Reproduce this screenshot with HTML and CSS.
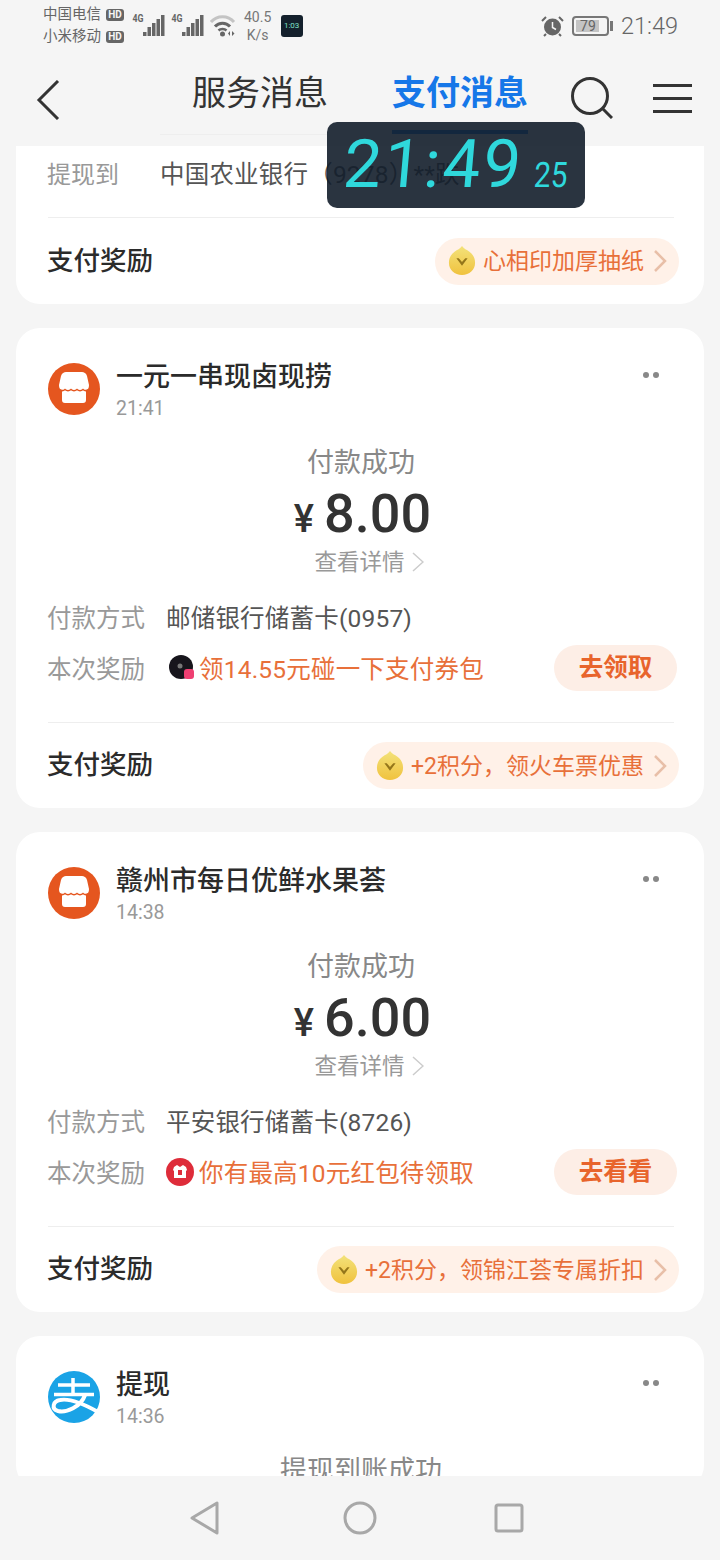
FILE: index.html
```html
<!DOCTYPE html>
<html lang="zh-CN">
<head>
    <meta charset="UTF-8">
    <meta name="viewport" content="width=device-width, initial-scale=1.0">
    <title>支付消息</title>
    <link rel="stylesheet" href="styles.css">
</head>
<body>

    <!-- shared icons -->
    <svg class="defs" width="0" height="0">
        <defs>
            <linearGradient id="gold" x1="0" y1="0" x2="0" y2="1">
                <stop offset="0" stop-color="#f3e27a"/>
                <stop offset="1" stop-color="#f0c23e"/>
            </linearGradient>
        </defs>
        <symbol id="coin" viewBox="0 0 30 32">
            <path d="M15 0 C17 3 20 4 23 6 C27 9 29 13 29 18 C29 26 23 31 15 31 C7 31 1 26 1 18 C1 13 3 9 7 6 C10 4 13 3 15 0Z" fill="url(#gold)"/>
            <path d="M9 13 L15 21 L21 13 L18.500 13 L15 17 L11.500 13Z" fill="#94761a"/>
        </symbol>
        <symbol id="shop" viewBox="0 0 52 52">
            <circle cx="26" cy="26" r="26" fill="#e5561f"/>
            <path d="M18 9 H34 C36 9 38 10 39 13 L41 22 C41 25 40 27 38 27 V37 C38 39 37 40 35 40 H17 C15 40 14 39 14 37 V27 C12 27 11 25 11 22 L13 13 C14 10 16 9 18 9Z" fill="#fff"/>
            <path d="M11 26 Q14 29 17 26.500 Q20 29 23 26.500 Q26 29 29 26.500 Q32 29 35 26.500 Q38 29 41 26" fill="none" stroke="#e5561f" stroke-width="1.500"/>
        </symbol>
        <symbol id="signal" viewBox="0 0 22 22">
            <rect x="0" y="17" width="3.500" height="4" fill="#666"/>
            <rect x="4.500" y="12" width="3.500" height="9" fill="#666"/>
            <rect x="9" y="8" width="3.500" height="13" fill="#666"/>
            <rect x="13.500" y="4" width="3.500" height="17" fill="#666"/>
            <rect x="18" y="0" width="3.500" height="21" fill="#666"/>
        </symbol>
        <symbol id="arrow" viewBox="0 0 14 24">
            <path d="M2 2 L12 12 L2 22" fill="none" stroke="#e8bfa8" stroke-width="2.500"/>
        </symbol>
    </svg>

    <div class="status-bar">
        <div class="status-left">
            <div class="carriers">
                <div class="carrier">中国电信<span class="hd">HD</span></div>
                <div class="carrier">小米移动<span class="hd">HD</span></div>
            </div>
            <span class="net">4G</span>
            <svg class="signal" width="22" height="22"><use href="#signal"/></svg>
            <span class="net net-2">4G</span>
            <svg class="signal" width="22" height="22"><use href="#signal"/></svg>
            <svg class="wifi" width="26" height="22" viewBox="0 0 26 22">
                <path d="M1 7 C7 0 18 0 24 7" fill="none" stroke="#c4c4c4" stroke-width="3"/>
                <path d="M5 11.500 C9 7 16 7 20 11.500" fill="none" stroke="#666" stroke-width="3"/>
                <path d="M8.500 15.500 C10.500 13.500 14.500 13.500 16.500 15.500" fill="none" stroke="#666" stroke-width="2.500"/>
                <circle cx="12.500" cy="19" r="2.500" fill="#666"/>
                <path d="M20 16 V21 L18 18.500Z M22 16 V21 L24.500 18.500Z" fill="#666"/>
            </svg>
            <div class="speed"><span>40.5</span><span>K/s</span></div>
            <div class="app-thumb">1:03</div>
        </div>
        <div class="status-right">
            <svg width="23" height="22" viewBox="0 0 23 22">
                <circle cx="11.500" cy="12" r="8.500" fill="#666"/>
                <path d="M11.500 7 V12.500 L15 14.500" fill="none" stroke="#f5f5f5" stroke-width="1.500"/>
                <path d="M1 6 L5 2 M22 6 L18 2 M5 19 L3 21 M18 19 L20 21" stroke="#666" stroke-width="2"/>
            </svg>
            <div class="battery"><div class="battery-fill"></div><span>79</span></div>
            <div class="battery-cap"></div>
            <span class="clock-small">21:49</span>
        </div>
    </div>

    <header class="top-nav">
        <svg class="back" width="24" height="40" viewBox="0 0 24 40">
            <path d="M22 1 L3 20 L22 39" fill="none" stroke="#333" stroke-width="3"/>
        </svg>
        <div class="tabs">
            <div class="tab">服务消息</div>
            <div class="tab active">支付消息</div>
        </div>
        <svg class="search" width="42" height="42" viewBox="0 0 42 42">
            <circle cx="19" cy="19" r="17.500" fill="none" stroke="#333" stroke-width="3"/>
            <path d="M31 31 L41 41" stroke="#333" stroke-width="3"/>
        </svg>
        <div class="menu"><i></i><i></i><i></i></div>
    </header>

    <main class="feed">
        <section class="card card-cut">
            <div class="row row-first">
                <span class="row-label row-label-short">提现到</span>
                <span class="row-value">中国农业银行（9278）**跌</span>
            </div>
            <div class="card-foot">
                <span class="foot-label">支付奖励</span>
                <div class="pill">
                    <svg width="28" height="30"><use href="#coin"/></svg>
                    <span>心相印加厚抽纸</span>
                    <svg width="14" height="24"><use href="#arrow"/></svg>
                </div>
            </div>
        </section>

        <section class="card">
            <div class="card-head">
                <svg class="avatar" width="52" height="52"><use href="#shop"/></svg>
                <div class="head-text">
                    <div class="title">一元一串现卤现捞</div>
                    <div class="time">21:41</div>
                </div>
                <div class="dots"><i></i><i></i></div>
            </div>
            <div class="pay-state">付款成功</div>
            <div class="amount"><span class="yen">¥</span>8.00</div>
            <div class="detail">查看详情<svg width="12" height="20" viewBox="0 0 12 20"><path d="M1 1 L11 10 L1 19" fill="none" stroke="#ccc" stroke-width="1.500"/></svg></div>
            <div class="row row-first-info">
                <span class="row-label">付款方式</span>
                <span class="row-value">邮储银行储蓄卡(0957)</span>
            </div>
            <div class="row row-reward">
                <span class="row-label">本次奖励</span>
                <svg class="reward-icon" width="28" height="28" viewBox="-3 -1 28 28">
                    <circle cx="12" cy="12" r="12" fill="#17151c"/>
                    <circle cx="11" cy="11" r="2.500" fill="#777"/>
                    <rect x="15" y="14" width="10" height="10" rx="3" fill="#ef3f72"/>
                </svg>
                <span class="reward-text">领14.55元碰一下支付券包</span>
                <span class="reward-btn">去领取</span>
            </div>
            <div class="card-foot">
                <span class="foot-label">支付奖励</span>
                <div class="pill">
                    <svg width="28" height="30"><use href="#coin"/></svg>
                    <span>+2积分，领火车票优惠</span>
                    <svg width="14" height="24"><use href="#arrow"/></svg>
                </div>
            </div>
        </section>

        <section class="card">
            <div class="card-head">
                <svg class="avatar" width="52" height="52"><use href="#shop"/></svg>
                <div class="head-text">
                    <div class="title">赣州市每日优鲜水果荟</div>
                    <div class="time">14:38</div>
                </div>
                <div class="dots"><i></i><i></i></div>
            </div>
            <div class="pay-state">付款成功</div>
            <div class="amount"><span class="yen">¥</span>6.00</div>
            <div class="detail">查看详情<svg width="12" height="20" viewBox="0 0 12 20"><path d="M1 1 L11 10 L1 19" fill="none" stroke="#ccc" stroke-width="1.500"/></svg></div>
            <div class="row row-first-info">
                <span class="row-label">付款方式</span>
                <span class="row-value">平安银行储蓄卡(8726)</span>
            </div>
            <div class="row row-reward">
                <span class="row-label">本次奖励</span>
                <svg class="reward-icon" width="28" height="28" viewBox="0 0 28 28">
                    <circle cx="14" cy="14" r="14" fill="#de2c3a"/>
                    <path d="M8 9 L11 7 L14 9 L17 7 L20 9 L21 12 L20 13 V20 H8 V13 L7 12Z" fill="#fff"/>
                    <rect x="12" y="12" width="4" height="5" fill="#de2c3a"/>
                </svg>
                <span class="reward-text">你有最高10元红包待领取</span>
                <span class="reward-btn">去看看</span>
            </div>
            <div class="card-foot">
                <span class="foot-label">支付奖励</span>
                <div class="pill">
                    <svg width="28" height="30"><use href="#coin"/></svg>
                    <span>+2积分，领锦江荟专属折扣</span>
                    <svg width="14" height="24"><use href="#arrow"/></svg>
                </div>
            </div>
        </section>

        <section class="card">
            <div class="card-head">
                <svg class="avatar" width="52" height="52" viewBox="0 0 52 52">
                    <circle cx="26" cy="26" r="26" fill="#1aa3e6"/>
                    <path d="M10 14 H42 M25 7 V23 M6 23.500 H46" fill="none" stroke="#fff" stroke-width="3.500"/>
                    <path d="M37 24 C33 36 18 42 10 40 C3 38 5 30 12 29 C22 27 36 33 50 41" fill="none" stroke="#fff" stroke-width="4"/>
                </svg>
                <div class="head-text">
                    <div class="title">提现</div>
                    <div class="time">14:36</div>
                </div>
                <div class="dots"><i></i><i></i></div>
            </div>
            <div class="pay-state">提现到账成功</div>
        </section>
    </main>

    <nav class="system-nav">
        <svg width="32" height="36" viewBox="0 0 32 36"><path d="M28 3 V33 L3 18Z" fill="none" stroke="#a8a8a8" stroke-width="3" stroke-linejoin="round"/></svg>
        <svg width="34" height="34" viewBox="0 0 34 34"><circle cx="17" cy="17" r="15" fill="none" stroke="#a8a8a8" stroke-width="3"/></svg>
        <svg class="nav-square" width="32" height="32" viewBox="0 0 32 32"><rect x="3" y="3" width="26" height="26" rx="2" fill="none" stroke="#a8a8a8" stroke-width="3"/></svg>
    </nav>

    <!-- floating clock widget -->
    <div class="float-clock">
        <span class="float-time">21:49</span>
        <span class="float-sec">25</span>
    </div>

</body>
</html>
```

FILE: styles.css
```css
* {
    box-sizing: border-box;
}

body {
    margin: 0;
    width: 720px;
    height: 1560px;
    display: flex;
    flex-direction: column;
    position: relative;
    overflow: hidden;
    background-color: #f5f5f5;
    font-family: Roboto, "Noto Sans CJK SC", sans-serif;
    color: #333;
}

.defs {
    position: absolute;
}

/* Status bar */
.status-bar {
    height: 60px;
    flex-shrink: 0;
    display: flex;
    justify-content: space-between;
    padding: 4px 42px 0 43px;
    color: #666;
}

.status-left,
.status-right {
    display: flex;
    align-items: center;
    height: 44px;
}

.carrier {
    display: flex;
    align-items: center;
    font-size: 14.500px;
    line-height: 22px;
}

.hd {
    width: 18px;
    height: 12px;
    margin-left: 5px;
    border-radius: 3px;
    background-color: #666;
    color: #f5f5f5;
    font-size: 10px;
    font-weight: 700;
    line-height: 12px;
    text-align: center;
}

.net {
    align-self: flex-start;
    margin: 9px 0 0 7px;
    font-size: 11px;
    font-weight: 700;
    line-height: 12px;
    transform: scaleX(.8);
}

.signal {
    margin-left: -2px;
}

.net-2 {
    margin-left: 5px;
}

.wifi {
    margin-left: 6px;
}

.speed {
    width: 36px;
    margin-left: 4px;
    display: flex;
    flex-direction: column;
    align-items: center;
    font-size: 14px;
    line-height: 18px;
    color: #777;
}

.app-thumb {
    width: 22px;
    height: 22px;
    margin-left: 5px;
    border-radius: 3px;
    background-color: #14202c;
    color: #7fe0c8;
    font-size: 8px;
    line-height: 22px;
    text-align: center;
}

.battery {
    position: relative;
    width: 37px;
    height: 20px;
    margin-left: 8px;
    padding: 2px;
    border: 2px solid #777;
    border-radius: 4px;
    font-size: 14px;
    line-height: 16px;
    text-align: center;
}

.battery-fill {
    width: 79%;
    height: 100%;
    background-color: #c4c4c4;
}

.battery span {
    position: absolute;
    left: 0;
    top: 0;
    width: 28px;
}

.battery-cap {
    width: 3px;
    height: 10px;
    margin-left: 1px;
    background-color: #777;
}

.clock-small {
    margin-left: 8px;
    font-size: 23.500px;
    font-weight: 300;
}

/* Title bar */
.top-nav {
    height: 86px;
    flex-shrink: 0;
    display: flex;
    align-items: flex-start;
    padding: 10px 0 0 36px;
}

.back {
    margin-top: 10px;
}

.tabs {
    display: flex;
    gap: 64px;
    height: 65px;
    margin-left: 100px;
    padding: 0 32px;
    border-bottom: 1px solid #eee;
}

.tab {
    position: relative;
    font-size: 34px;
    line-height: 46px;
    white-space: nowrap;
}

.tab.active {
    color: #1677e8;
    font-weight: 700;
}

.tab.active::after {
    content: "";
    position: absolute;
    left: 0;
    right: 0;
    top: 60px;
    height: 4px;
    background-color: #1677e8;
}

.search {
    margin: 7px 0 0 11px;
}

.menu {
    width: 39px;
    margin: 14px 0 0 40px;
}

.menu i {
    display: block;
    height: 3px;
    margin-bottom: 10px;
    background-color: #333;
}

/* Message cards */
.feed {
    flex: 1;
    min-height: 0;
    overflow: hidden;
}

.card {
    margin: 0 16px 24px;
    padding: 34px 30px 0 32px;
    border-radius: 24px;
    background-color: white;
}

.card-cut {
    padding-top: 6px;
    border-radius: 0 0 24px 24px;
}

.card-head {
    display: flex;
    align-items: flex-start;
}

.avatar {
    margin-top: 1px;
    flex-shrink: 0;
}

.head-text {
    flex: 1;
    margin-left: 16px;
}

.title {
    font-size: 27px;
    font-weight: 500;
    line-height: 30px;
    color: #2b2b2b;
}

.time {
    margin-top: 6px;
    font-size: 19.500px;
    line-height: 22px;
    color: #999;
}

.dots {
    display: flex;
    gap: 4px;
    margin: 10px 15px 0 0;
}

.dots i {
    width: 6px;
    height: 6px;
    border-radius: 50%;
    background-color: #888;
}

.pay-state {
    margin-top: 25px;
    font-size: 27px;
    line-height: 36px;
    color: #888;
    text-align: center;
}

.amount {
    height: 64px;
    margin-top: 1px;
    padding-left: 3px;
    font-size: 54px;
    font-weight: 500;
    line-height: 64px;
    text-align: center;
    color: #333;
}

.yen {
    margin-right: 10px;
    font-size: 38px;
}

.detail {
    display: flex;
    align-items: center;
    justify-content: center;
    gap: 7px;
    height: 30px;
    margin-top: 1px;
    padding-left: 16px;
    font-size: 22.500px;
    line-height: 30px;
    color: #999;
}

.row {
    display: flex;
    align-items: center;
    font-size: 24.500px;
}

.row-first {
    height: 40px;
}

.row-first-info {
    height: 40px;
    margin-top: 19px;
}

.row-reward {
    height: 46px;
    margin-top: 9px;
}

.row-label {
    width: 119px;
    flex-shrink: 0;
    margin-left: -1px;
    color: #999;
}

.row-reward .row-label,
.reward-text {
    padding-bottom: 2px;
}

.row-label-short {
    width: 113px;
    font-size: 24px;
}

.row-value {
    color: #555;
    letter-spacing: .2px;
    white-space: nowrap;
}

.reward-icon {
    flex-shrink: 0;
}

.reward-text {
    flex: 1;
    margin-left: 5px;
    color: #e8703a;
    letter-spacing: .2px;
    white-space: nowrap;
}

.reward-btn {
    width: 123px;
    height: 46px;
    margin-right: -3px;
    border-radius: 23px;
    background-color: #fdeee6;
    color: #e8642c;
    font-weight: 700;
    line-height: 46px;
    text-align: center;
}

.card-foot {
    display: flex;
    align-items: center;
    justify-content: space-between;
    height: 86px;
    margin-top: 31px;
    border-top: 1px solid #eee;
}

.card-cut .card-foot {
    height: 87px;
    margin-top: 25px;
}

.foot-label {
    margin-left: -1px;
    padding-bottom: 6px;
    font-size: 26.500px;
    font-weight: 500;
    color: #2b2b2b;
}

.pill {
    display: flex;
    align-items: center;
    height: 47px;
    margin-right: -5px;
    padding: 0 12px 0 13px;
    border-radius: 24px;
    background-color: #fff1e8;
    font-size: 23px;
    color: #e8703a;
    white-space: nowrap;
}

.pill span {
    margin: -4px 9px 0 7px;
}

/* Bottom system buttons */
.system-nav {
    height: 84px;
    flex-shrink: 0;
    display: flex;
    align-items: center;
    justify-content: center;
    gap: 122px;
    background-color: #f5f5f5;
}

.nav-square {
    margin-left: -6px;
    margin-right: 6px;
}

/* Floating clock, sits over the page */
.float-clock {
    position: absolute;
    left: 327px;
    top: 122px;
    width: 258px;
    height: 86px;
    border-radius: 10px;
    background-color: rgba(19, 30, 43, .9);
    color: #2fd8dc;
}

.float-time {
    position: absolute;
    left: 17px;
    top: 11px;
    font-family: Roboto, sans-serif;
    font-size: 67px;
    font-weight: 400;
    line-height: 62px;
    letter-spacing: 2.500px;
    transform: skewX(-5deg);
}

.float-sec {
    position: absolute;
    left: 207px;
    top: 38px;
    font-size: 35px;
    font-weight: 400;
    line-height: 32px;
    transform: scaleX(.85) skewX(-5deg);
    transform-origin: left;
}
```
